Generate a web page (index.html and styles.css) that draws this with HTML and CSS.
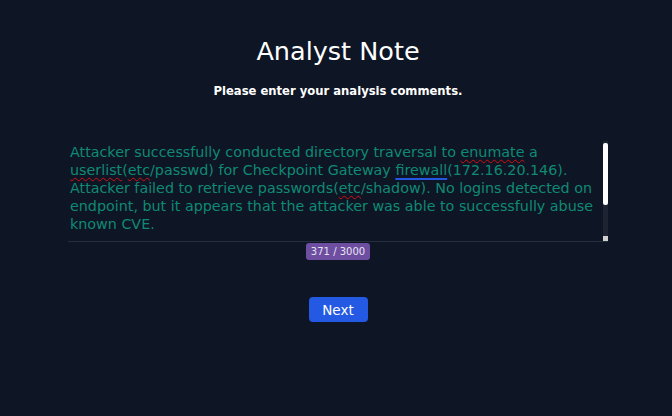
FILE: index.html
```html
<!DOCTYPE html>
<html>
<head>
<meta charset="utf-8">
<link rel="stylesheet" href="styles.css">
</head>
<body>
<main class="page">
  <h1 class="title">Analyst Note</h1>
  <p class="subtitle">Please enter your analysis comments.</p>
  <div class="editor">
    <div class="note">Attacker successfully conducted directory traversal to <span class="spell">enumate</span> a<br><span class="spell">userlist</span>(<span class="spell">etc</span>/passwd) for Checkpoint Gateway <span class="grammar">firewall</span>(172.16.20.146).<br>Attacker failed to retrieve passwords(<span class="spell">etc</span>/shadow). No logins detected on<br>endpoint, but it appears that the attacker was able to successfully abuse<br>known CVE.</div>
    <div class="scrollbar"><div class="thumb"></div><div class="grip"></div></div>
  </div>
  <div class="counter">371 / 3000</div>
  <button class="next">Next</button>
</main>
</body>
</html>
```
FILE: styles.css
```css
html, body {
  margin: 0;
  padding: 0;
  background: #0e1525;
  height: 100%;
}
.page {
  display: flex;
  flex-direction: column;
  align-items: center;
  padding-left: 4px;
  font-family: "DejaVu Sans", sans-serif;
  color: #fff;
}
.title {
  margin: 36px 0 0;
  font-size: 25.5px;
  font-weight: 400;
  line-height: 30px;
}
.subtitle {
  margin: 17px 0 0;
  font-size: 11.6px;
  font-weight: 700;
  line-height: 16px;
}
.editor {
  margin-top: 42px;
  width: 540px;
  height: 100px;
  display: flex;
  border-bottom: 1px solid #262d3d;
}
.note {
  flex: 1;
  padding: 2px 0 0 2px;
  font-size: 14.3px;
  line-height: 18px;
  color: #0f8a74;
  white-space: nowrap;
  overflow: hidden;
}
.spell {
  text-decoration: underline wavy #d01010;
  text-decoration-thickness: 1px;
  text-underline-offset: 2px;
}
.grammar {
  text-decoration: underline solid #2457e0;
  text-decoration-thickness: 2px;
  text-underline-offset: 3px;
}
.scrollbar {
  width: 5px;
  display: flex;
  flex-direction: column;
  background: #1e2331;
}
.thumb {
  height: 62px;
  margin-top: 2px;
  background: #ffffff;
  border-radius: 2px;
}
.grip {
  margin-top: auto;
  height: 5px;
  background: #d0d0d0;
}
.counter {
  margin-top: 1px;
  background: #6d4ea1;
  color: #e8e4f0;
  font-size: 10px;
  height: 17px;
  line-height: 17px;
  width: 64px;
  text-align: center;
  border-radius: 3px;
}
.next {
  margin-top: 37px;
  width: 59px;
  height: 25px;
  padding: 0;
  border: none;
  border-radius: 4px;
  background: #2459e3;
  color: #fff;
  font-family: "DejaVu Sans", sans-serif;
  font-size: 13.5px;
}
```
